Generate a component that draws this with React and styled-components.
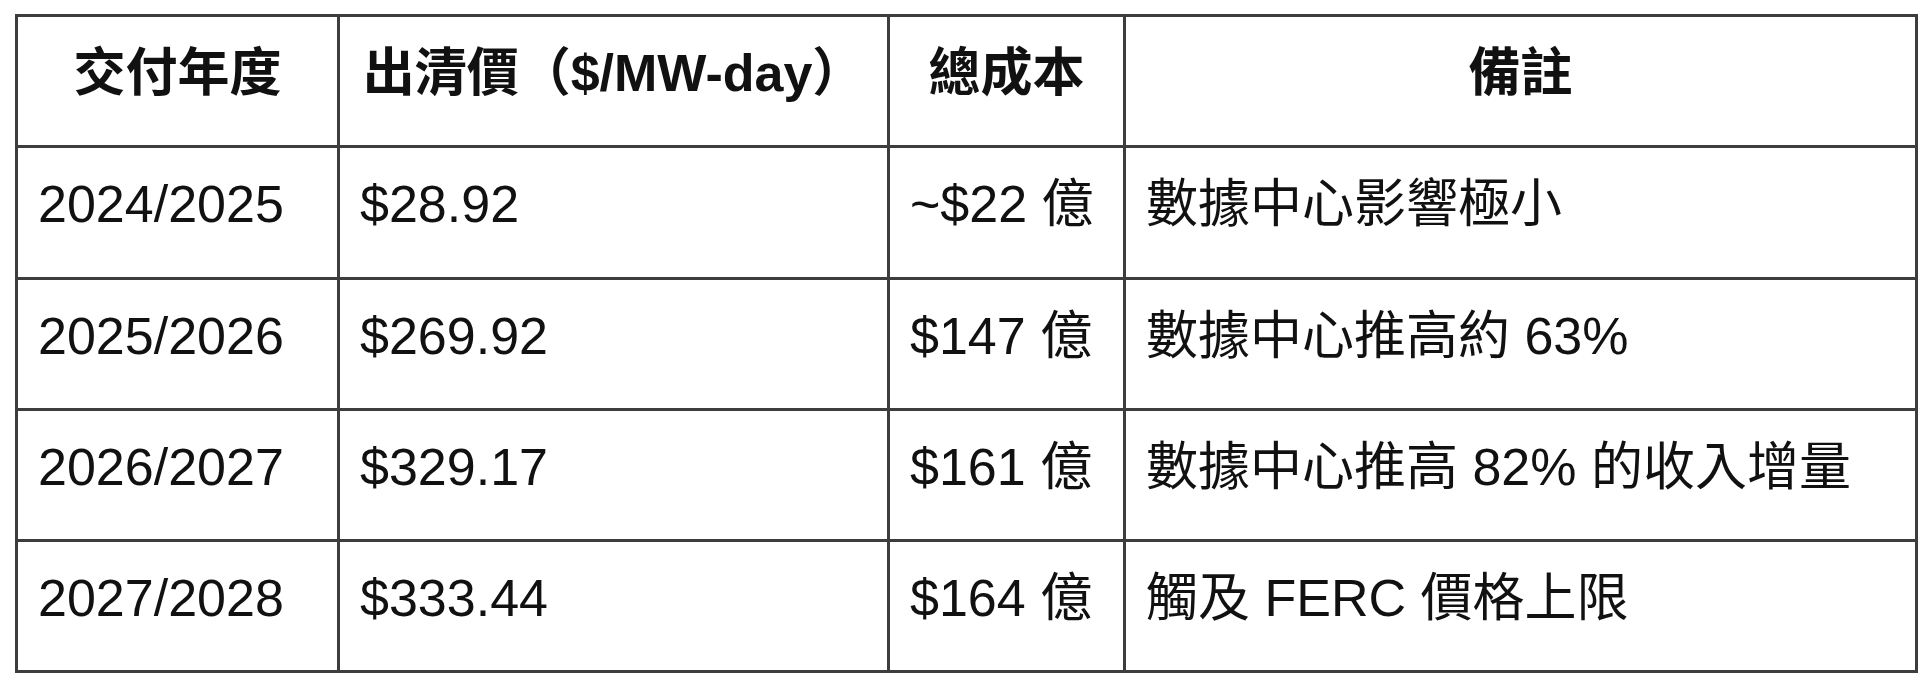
import { Fragment } from "react";
import styled, { createGlobalStyle } from "styled-components";

const rows = [
  { year: "2024/2025", price: "$28.92", cost: "~$22 億", note: "數據中心影響極小" },
  { year: "2025/2026", price: "$269.92", cost: "$147 億", note: "數據中心推高約 63%" },
  { year: "2026/2027", price: "$329.17", cost: "$161 億", note: "數據中心推高 82% 的收入增量" },
  { year: "2027/2028", price: "$333.44", cost: "$164 億", note: "觸及 FERC 價格上限" },
];

const headers = ["交付年度", "出清價（$/MW-day）", "總成本", "備註"];

const App = () => {
  return (
    <Page>
      <GlobalStyle />
      <Grid>
        {headers.map((h) => (
          <HeadCell key={h}>{h}</HeadCell>
        ))}
        {rows.map((r) => (
          <Fragment key={r.year}>
            <Cell>{r.year}</Cell>
            <Cell>{r.price}</Cell>
            <Cell>{r.cost}</Cell>
            <Cell>{r.note}</Cell>
          </Fragment>
        ))}
      </Grid>
    </Page>
  );
};

export default App;

const GlobalStyle = createGlobalStyle`
    html, body {
        margin: 0;
        padding: 0;
        background: #ffffff;
    }
`;

const Page = styled.div`
    width: 1920px;
    height: 684px;
    padding: 14px 0 0 15px;
    box-sizing: border-box;
    background: #ffffff;
`;

const Grid = styled.div`
    display: grid;
    grid-template-columns: 319px 547px 233px 789px;
    grid-template-rows: 128px 129px 128px 128px 128px;
    gap: 3px;
    padding: 3px;
    width: max-content;
    background: #3d3d3d;
    font-family: "Liberation Sans", "Noto Sans CJK TC", sans-serif;
    font-size: 52px;
    line-height: 1.2;
    color: #111111;
`;

const Cell = styled.div`
    background: #ffffff;
    padding: 25px 20px 0;
    white-space: nowrap;
`;

const HeadCell = styled(Cell)`
    font-weight: 700;
    text-align: center;
    padding: 25px 0 0;
`;
